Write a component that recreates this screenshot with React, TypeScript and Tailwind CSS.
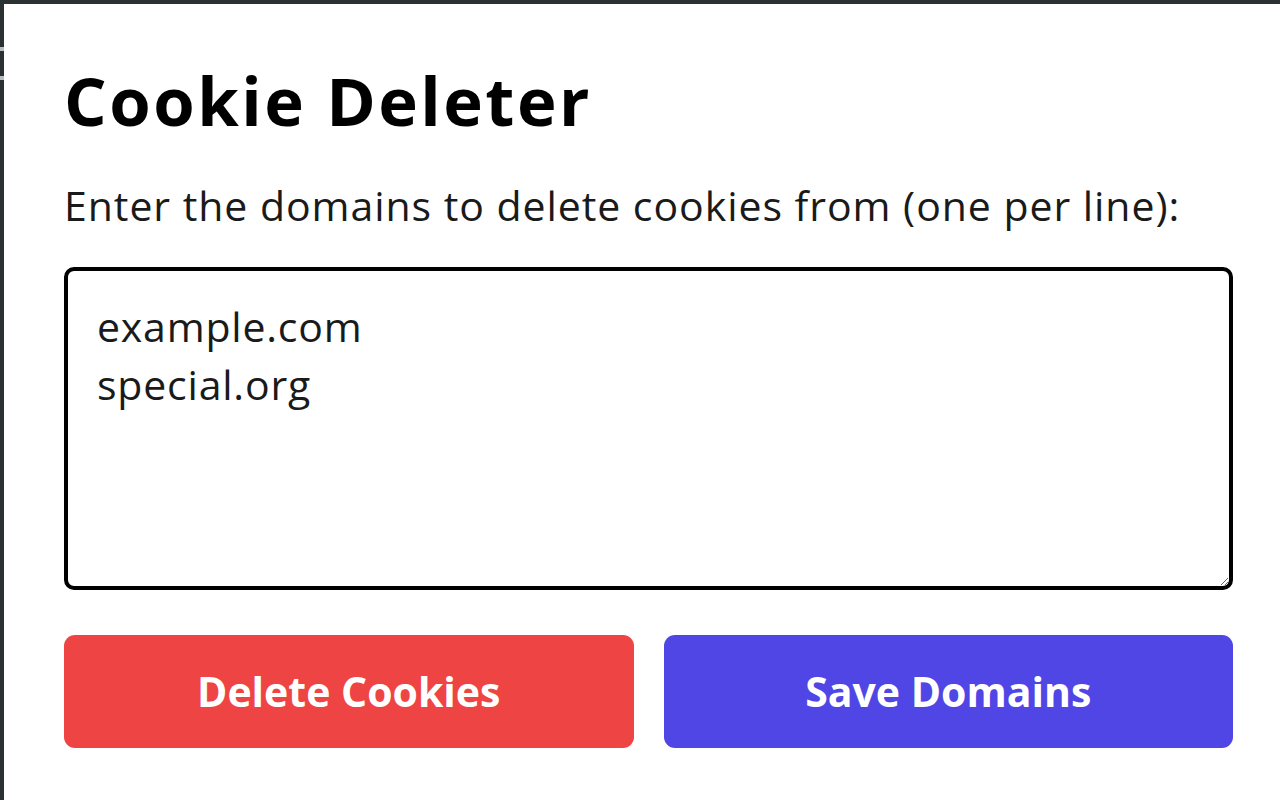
import React from "react";

export default function App() {
  return (
    <div className="relative h-[800px] w-[1280px] border-l-4 border-t-4 border-[#2b3033] bg-white font-['Open_Sans',sans-serif] text-black">
      <span className="absolute left-[-4px] top-[43px] h-[4px] w-[4px] bg-[#b9bdbf]" />
      <span className="absolute left-[-4px] top-[72px] h-[4px] w-[4px] bg-[#b9bdbf]" />
      <div className="pl-[60px] pr-[44px] pt-[63px]">
        <h1 className="text-[67px] font-bold leading-none tracking-[2.5px]">Cookie Deleter</h1>
        <p className="mt-[51px] text-[41px] leading-none tracking-[0.95px] text-[#1a1a1a]">
          Enter the domains to delete cookies from (one per line):
        </p>
        <textarea
          className="mt-[41px] block h-[323px] w-[1169px] resize-y rounded-[10px] border-4 border-black bg-white px-[29px] pt-[26px] font-['Open_Sans',sans-serif] text-[41px] leading-[58px] tracking-[0.8px] text-[#1a1a1a] outline-none"
          defaultValue={"example.com\nspecial.org"}
        />
        <div className="mt-[45px] grid w-[1169px] grid-cols-2 gap-[30px]">
          <button className="h-[113px] rounded-[11px] bg-[#ef4444] text-[41px] font-bold text-white">
            Delete Cookies
          </button>
          <button className="h-[113px] rounded-[11px] bg-[#4f46e5] text-[41px] font-bold text-white">
            Save Domains
          </button>
        </div>
      </div>
    </div>
  );
}
